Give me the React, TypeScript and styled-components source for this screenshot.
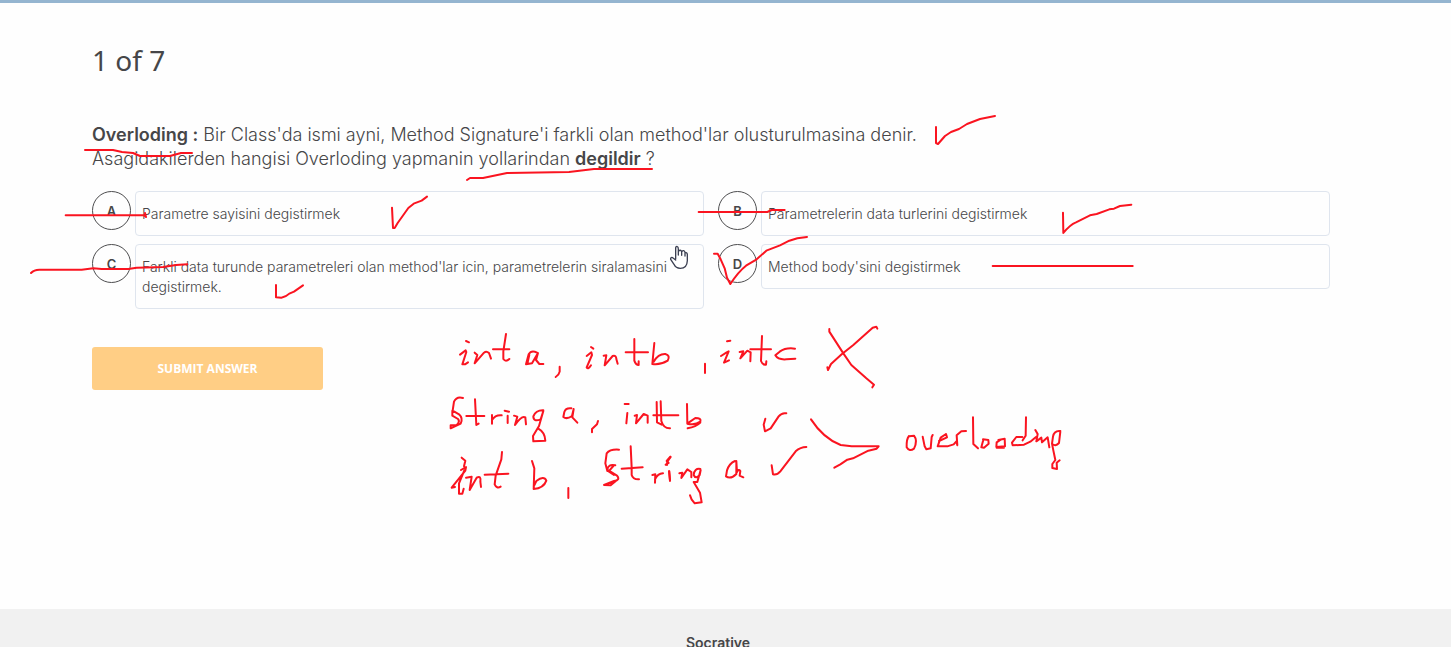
import React, { useState } from 'react';
import styled, { createGlobalStyle } from 'styled-components';

const GlobalStyle = createGlobalStyle`
  *, *::before, *::after { box-sizing: border-box; }
  body {
    margin: 0;
    background: #fefefe;
    color: #464648;
    font-family: Inter, "Liberation Sans", sans-serif;
  }
`;

const Page = styled.div`
  position: relative;
  display: flex;
  flex-direction: column;
  height: 100vh;
  overflow: hidden;
  border-top: 3px solid #95b5d0;
`;

const Quiz = styled.main`
  flex: 1;
  padding: 37px 121px 0 92px;
`;

const Progress = styled.h1`
  margin: 0;
  font-family: "Noto Sans", "Open Sans", sans-serif;
  font-size: 28px;
  font-weight: 400;
  line-height: 40px;
`;

const Question = styled.p`
  margin: 43px 0 20px;
  font-size: 18px;
  font-weight: 300;
  line-height: 24px;

  b { font-weight: 600; }
`;

const Choices = styled.div`
  display: grid;
  grid-template-columns: 1fr 1fr;
  align-items: start;
  gap: 8px 14px;
`;

const Choice = styled.button`
  display: flex;
  align-items: flex-start;
  gap: 4px;
  padding: 0;
  border: 0;
  background: none;
  color: inherit;
  font: inherit;
  text-align: left;
  cursor: pointer;
`;

const Letter = styled.span<{ $selected: boolean }>`
  display: grid;
  place-items: center;
  flex: none;
  width: 39px;
  height: 39px;
  border: 1px solid #4d4d4f;
  border-radius: 50%;
  background: ${(p) => (p.$selected ? '#e6edf5' : 'transparent')};
  font-size: 13px;
  font-weight: 600;
`;

const Answer = styled.span`
  flex: 1;
  padding: 12px 6px 11px;
  border: 1px solid #dfe5ee;
  border-radius: 4px;
  font-size: 14px;
  font-weight: 300;
  line-height: 20px;
`;

const Submit = styled.button`
  width: 231px;
  height: 43px;
  margin-top: 38px;
  border: 0;
  border-radius: 3px;
  background: #ffce85;
  color: #fff;
  font-family: "Open Sans", sans-serif;
  font-size: 12px;
  font-weight: 700;
`;

const Footer = styled.footer`
  flex: none;
  height: 38px;
  padding: 24px 15px 0 0;
  background: #f1f1f1;
  font-size: 14px;
  font-weight: 600;
  line-height: 20px;
  text-align: center;
`;

const Ink = styled.svg`
  position: absolute;
  top: -3px;
  left: 0;
  fill: none;
  stroke: #fa1420;
  stroke-linecap: round;
  stroke-linejoin: round;
  pointer-events: none;
`;

const choices = [
  { letter: 'A', text: 'Parametre sayisini degistirmek' },
  { letter: 'B', text: 'Parametrelerin data turlerini degistirmek' },
  {
    letter: 'C',
    text: "Farkli data turunde parametreleri olan method'lar icin, parametrelerin siralamasini degistirmek.",
  },
  { letter: 'D', text: "Method body'sini degistirmek" },
];

const third = (x: number, y: number) => `translate(${x} ${y}) scale(0.33333)`;

function Annotations() {
  return (
    <Ink width="1200" height="520" viewBox="0 0 1200 520" aria-hidden="true">
      <g strokeWidth="2">
        <path d="M85 150H113L122 152L133 153L140 156H170L181 153H192" />
        <path d="M467 180L470 178L483 178L507 173L569 172L594 169H652" />
        <path d="M936 127V143L938 144L945 136L951 132L959 129L967 124L980 119L995 116" />
      </g>
      <g transform={third(20, 180)} strokeWidth="6">
        <path d="M137 106H372L378 111L375 99" />
        <path d="M33 279Q42 269 58 269H185L220 265L245 267H325L350 263L430 261L468 255L502 253" />
        <path d="M1116 83L1119 144H1124L1133 129L1165 84L1181 71L1205 62L1221 50" />
        <path d="M768 315V352L784 353Q798 351 808 341L822 335L849 316" />
      </g>
      <g transform={third(660, 180)} strokeWidth="6">
        <path d="M116 96H322L335 90H374" />
        <path d="M1209 98L1210 159Q1230 134 1248 127L1290 106L1310 102L1348 88L1362 86L1380 78L1414 74" />
        <path d="M162 221H173L182 238L194 265L201 293L211 312Q235 275 258 257L290 238L319 212L360 196L388 182L412 175L441 171" />
        <path d="M998 258H1418" />
      </g>
      <g transform={third(440, 315)} strokeWidth="6">
        <path d="M78 78L87 82M60 119L77 106L79 111L67 148H75L84 142" />
        <path d="M104 113L112 120L104 145L132 113Q139 107 147 114L153 131" />
        <path d="M198 57L190 109V132Q197 142 208 132M159 103H208" />
        <path d="M291 113Q274 104 266 118L258 148L276 145L294 114L288 135L298 147H310M268 119L262 146" />
        <path d="M359 155V170Q357 180 347 186" />
        <path d="M453 96L460 101M440 123L454 112L456 120L440 157Q445 164 453 151" />
        <path d="M491 122L499 121L494 151L518 123Q529 120 529 132L533 146" />
        <path d="M583 72V137Q587 150 596 150V139M557 112H624" />
        <path d="M643 84L637 147Q660 151 683 137Q692 121 676 117Q655 116 641 140" />
        <path d="M69 249Q50 243 42 260L38 287L57 298Q70 310 62 326L32 340V331L50 330Q61 320 54 312L37 302V287" />
        <path d="M105 253L109 330L116 326M79 303H133" />
        <path d="M156 300V326M156 315Q166 299 185 301M203 302V324M194 287L207 290" />
        <path d="M222 302L232 305L225 330Q245 300 256 307L258 328" />
        <path d="M310 286Q288 285 280 304Q280 322 302 313L310 288L297 333L279 363L280 379L316 377Q315 352 295 341" />
        <path d="M394 280Q377 278 373 291L370 306Q380 314 396 303L401 282L397 307L412 323" />
        <path d="M474 318L471 328L456 342V352" />
        <path d="M554 267H566M562 294L559 325M584 302L591 300L588 325L611 297L623 302V323" />
        <path d="M650 261L651 322L665 329M662 259L664 318Q671 341 690 340M640 301H715" />
        <path d="M65 428L76 437L72 454M63 465L78 456L76 467L35 518L45 516M73 466L57 505V536L67 536L71 521" />
        <path d="M78 488L95 485L89 525L110 488Q124 480 121 500L123 516" />
        <path d="M186 411L184 433L167 482L164 508Q170 522 182 515M134 479L205 476" />
        <path d="M276 438L283 460L281 522Q311 520 319 497Q312 481 289 498L281 515M385 519V549" />
        <path d="M537 404Q510 402 500 415L496 445L502 468M526 451Q504 446 502 464L531 482Q542 496 522 498L492 510L512 511L534 493M520 453L506 469L522 480" />
        <path d="M572 394L575 458V480Q579 494 597 493M545 461L608 457" />
        <path d="M637 480L646 478L645 503M645 493Q653 476 669 475M687 469L690 497M677 449L686 444L680 438L691 425" />
      </g>
      <g transform={third(660, 315)} strokeWidth="6">
        <path d="M135 146V174M201 79L211 77M183 123L200 112L206 109L192 143L207 136" />
        <path d="M239 111L250 109L241 130L262 107L272 112L271 139M306 63L303 138Q308 151 318 149L319 139M271 103H333" />
        <path d="M405 101Q378 97 359 110L346 121Q354 135 379 133L406 131" />
        <path d="M508 42L508 50L550 115L574 150L619 190L642 209L637 217M652 41L649 35L638 38L580 90L545 118L513 147L504 165L502 157" />
        <path d="M81 267L82 326Q105 332 121 320Q125 309 106 309L86 323M83 340Q108 336 121 323" />
        <path d="M316 311L311 329L315 349L332 340L356 304Q366 292 379 295" />
        <path d="M453 313Q490 370 542 390L575 394H656L650 401L625 407L579 430L562 434L541 448L523 458" />
        <path d="M335 451L339 478Q351 481 361 469L407 409Q421 396 439 396" />
        <path d="M28 469L30 497M21 450L22 440L32 426M58 475L67 473L64 489L82 463L94 471V487" />
        <path d="M121 462Q103 459 101 480Q107 494 119 480L122 465L112 501H101L120 533L125 562L104 565Q93 555 90 541" />
        <path d="M225 438Q208 445 201 466L198 484Q212 494 229 477V438L231 471Q236 461 241 468L239 482L250 487" />
      </g>
      <g transform={third(870, 400)} strokeWidth="6">
        <path d="M117 108Q109 117 110 142Q118 156 132 146Q144 122 132 107L118 109" />
        <path d="M158 110L164 139L169 148L182 145L185 111L188 105" />
        <path d="M207 123L231 112L228 102L212 113L203 139L232 139L251 133L259 124L262 136L260 106L274 94L288 93" />
        <path d="M309 52L310 132L324 145M339 118L355 120L356 131L342 143L334 142L340 119" />
        <path d="M385 120L404 116L405 139L379 141L380 127L392 119M380 143H402" />
        <path d="M468 52L467 107L458 121M457 111H439L426 128L428 136L462 134L481 125L498 111M496 90L503 102L499 124L514 113L516 127L533 112L538 142" />
        <path d="M571 93Q552 91 549 110L546 131Q556 141 567 129L571 95M546 131L550 151L556 180L547 192V204L561 207L560 188L569 181" />
      </g>
      <g transform={third(660, 180)} stroke="#3c4052" strokeWidth="4">
        <path fill="#fff" d="M47 236V204Q47 198 52 200Q55 201 55 208V225V214Q62 207 65 215V226V215Q72 208 75 217V228V219Q81 216 82 223V242Q81 265 61 265Q47 265 42 253L32 238Q31 231 38 233L47 240" />
      </g>
    </Ink>
  );
}

export default function App() {
  const [selected, setSelected] = useState<string | null>(null);
  return (
    <Page>
      <GlobalStyle />
      <Quiz>
        <Progress>1 of 7</Progress>
        <Question>
          <b>Overloding :</b> Bir Class'da ismi ayni, Method Signature'i farkli olan method'lar
          olusturulmasina denir.
          <br />
          Asagidakilerden hangisi Overloding yapmanin yollarindan <b>degildir</b> ?
        </Question>
        <Choices>
          {choices.map(({ letter, text }) => (
            <Choice
              key={letter}
              type="button"
              aria-pressed={selected === letter}
              onClick={() => setSelected(letter)}
            >
              <Letter $selected={selected === letter}>{letter}</Letter>
              <Answer>{text}</Answer>
            </Choice>
          ))}
        </Choices>
        <Submit type="submit">SUBMIT ANSWER</Submit>
      </Quiz>
      <Footer>Socrative</Footer>
      <Annotations />
    </Page>
  );
}
